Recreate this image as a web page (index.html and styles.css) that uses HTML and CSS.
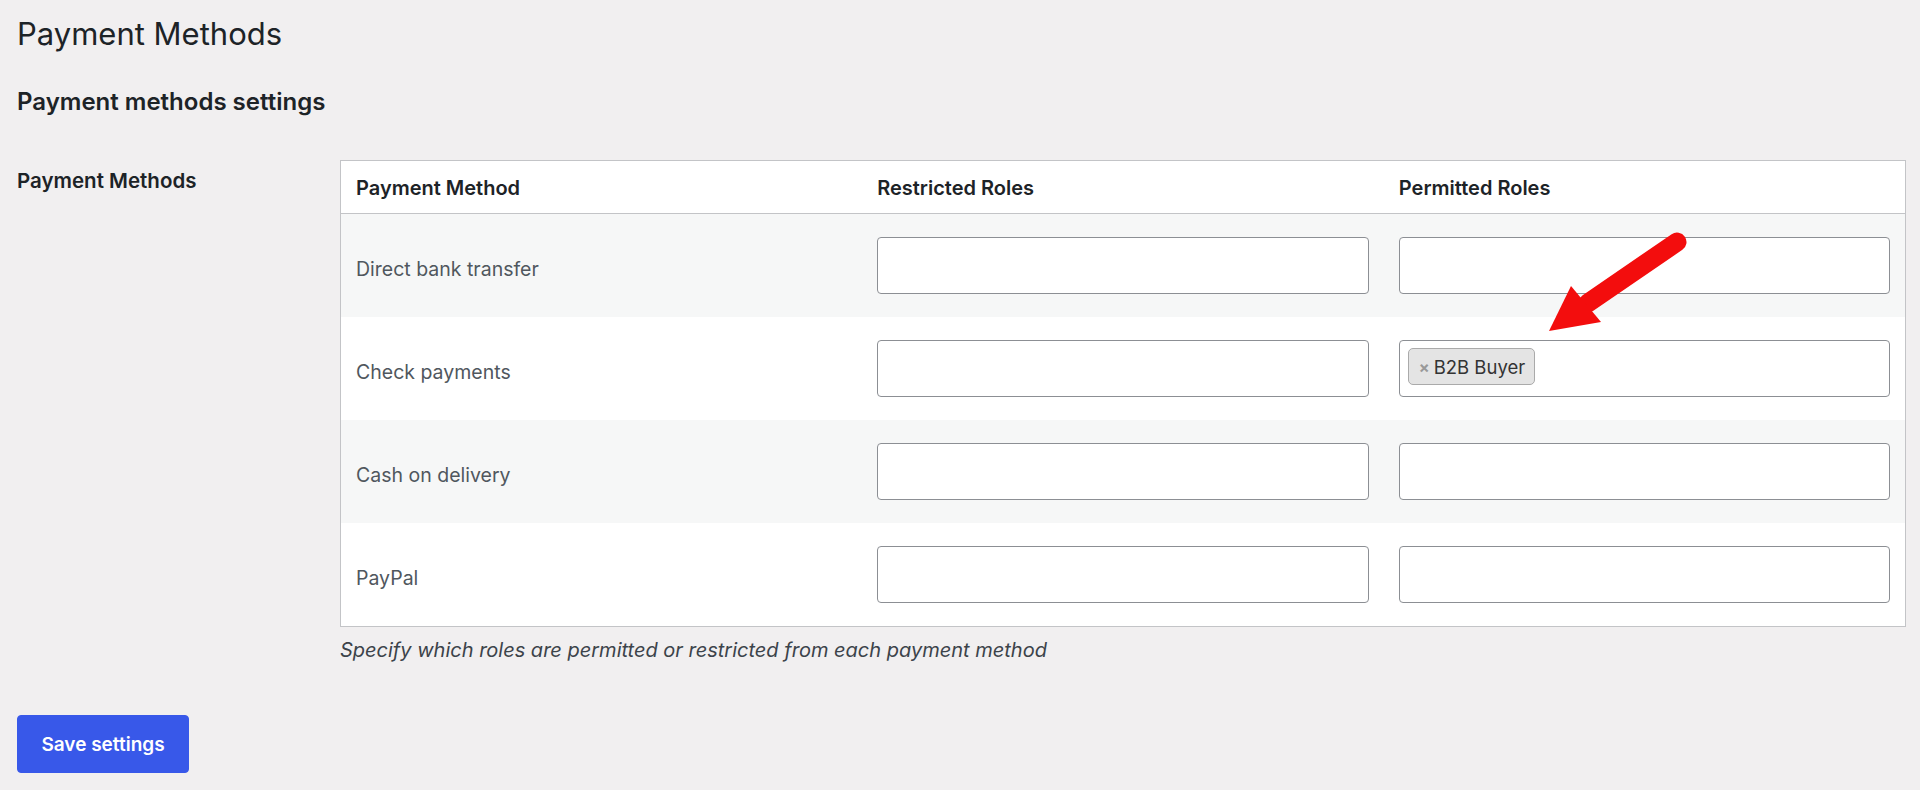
FILE: index.html
```html
<!DOCTYPE html>
<html lang="en">
<head>
    <meta charset="UTF-8">
    <meta name="viewport" content="width=device-width, initial-scale=1.0">
    <title>Payment Methods</title>
    <link rel="stylesheet" href="styles.css">
</head>
<body>

    <div class="wrap">
        <h1>Payment Methods</h1>
        <h2>Payment methods settings</h2>

        <div class="setting-row">
            <div class="setting-label">Payment Methods</div>
            <div class="setting-field">
                <table class="roles-table">
                    <thead>
                        <tr>
                            <th>Payment Method</th>
                            <th>Restricted Roles</th>
                            <th>Permitted Roles</th>
                        </tr>
                    </thead>
                    <tbody>
                        <tr>
                            <td>Direct bank transfer</td>
                            <td><div class="role-select"></div></td>
                            <td><div class="role-select"></div></td>
                        </tr>
                        <tr>
                            <td>Check payments</td>
                            <td><div class="role-select"></div></td>
                            <td>
                                <div class="role-select">
                                    <span class="chip"><span class="chip-remove">×</span>B2B Buyer</span>
                                </div>
                            </td>
                        </tr>
                        <tr>
                            <td>Cash on delivery</td>
                            <td><div class="role-select"></div></td>
                            <td><div class="role-select"></div></td>
                        </tr>
                        <tr>
                            <td>PayPal</td>
                            <td><div class="role-select"></div></td>
                            <td><div class="role-select"></div></td>
                        </tr>
                    </tbody>
                </table>
                <p class="description">Specify which roles are permitted or restricted from each payment method</p>
            </div>
        </div>

        <button class="button-primary">Save settings</button>
    </div>

    <!-- annotation arrow -->
    <svg class="pointer" width="170" height="120" viewBox="0 0 170 120">
        <line x1="147" y1="17" x2="58" y2="78" stroke="#f30d0d" stroke-width="19" stroke-linecap="round"/>
        <polygon points="19,106 41,61 71,97" fill="#f30d0d"/>
    </svg>

</body>
</html>
```

FILE: styles.css
```css
body {
    font-family: 'Inter', 'Noto Sans', sans-serif;
    background-color: #f1eff0;
    color: #1d2327;
    margin: 0;
    padding: 0;
    position: relative;
}

.wrap {
    padding: 0 17px;
}

h1 {
    font-size: 31px;
    font-weight: 400;
    line-height: 36px;
    margin: 16px 0 0;
}

h2 {
    font-size: 24px;
    font-weight: 600;
    line-height: 28px;
    margin: 36px 0 0;
}

.setting-row {
    display: grid;
    grid-template-columns: 323px 1566px;
    margin-top: 44px;
}

.setting-label {
    font-size: 20.5px;
    font-weight: 600;
    line-height: 24px;
    padding-top: 9px;
}

.roles-table {
    width: 100%;
    table-layout: fixed;
    border-collapse: collapse;
    background-color: #ffffff;
    border: 1px solid #c3c4c7;
}

.roles-table th {
    text-align: left;
    font-size: 20px;
    font-weight: 600;
    line-height: 24px;
    padding: 15px 15px 13px;
    border-bottom: 1px solid #c3c4c7;
}

.roles-table td {
    font-size: 19.5px;
    line-height: 24px;
    color: #50575e;
    padding: 23px 15px;
    vertical-align: middle;
}

.roles-table td:first-child {
    padding-top: 26px;
    padding-bottom: 20px;
}

.roles-table tbody tr:nth-child(odd) td {
    background-color: #f6f7f7;
}

.role-select {
    height: 57px;
    box-sizing: border-box;
    background-color: #ffffff;
    border: 1px solid #8c8f94;
    border-radius: 4px;
    padding: 7px 8px;
    display: flex;
    align-items: flex-start;
}

.chip {
    display: inline-flex;
    align-items: center;
    height: 37px;
    box-sizing: border-box;
    padding: 0 9px 0 10px;
    background-color: #e4e4e4;
    border: 1px solid #aaaaaa;
    border-radius: 5px;
    font-size: 18.5px;
    color: #333333;
}

.chip-remove {
    color: #999999;
    font-weight: 700;
    font-size: 16px;
    margin-right: 4px;
}

.description {
    font-size: 20px;
    font-style: italic;
    line-height: 24px;
    color: #3c434a;
    margin: 11px 0 0;
}

.button-primary {
    margin-top: 53px;
    width: 172px;
    height: 58px;
    font-family: inherit;
    font-size: 19px;
    font-weight: 600;
    color: #ffffff;
    background-color: #3858e9;
    border: 1px solid #3858e9;
    border-radius: 4px;
    cursor: pointer;
}

.pointer {
    position: absolute;
    left: 1530px;
    top: 225px;
}
```
